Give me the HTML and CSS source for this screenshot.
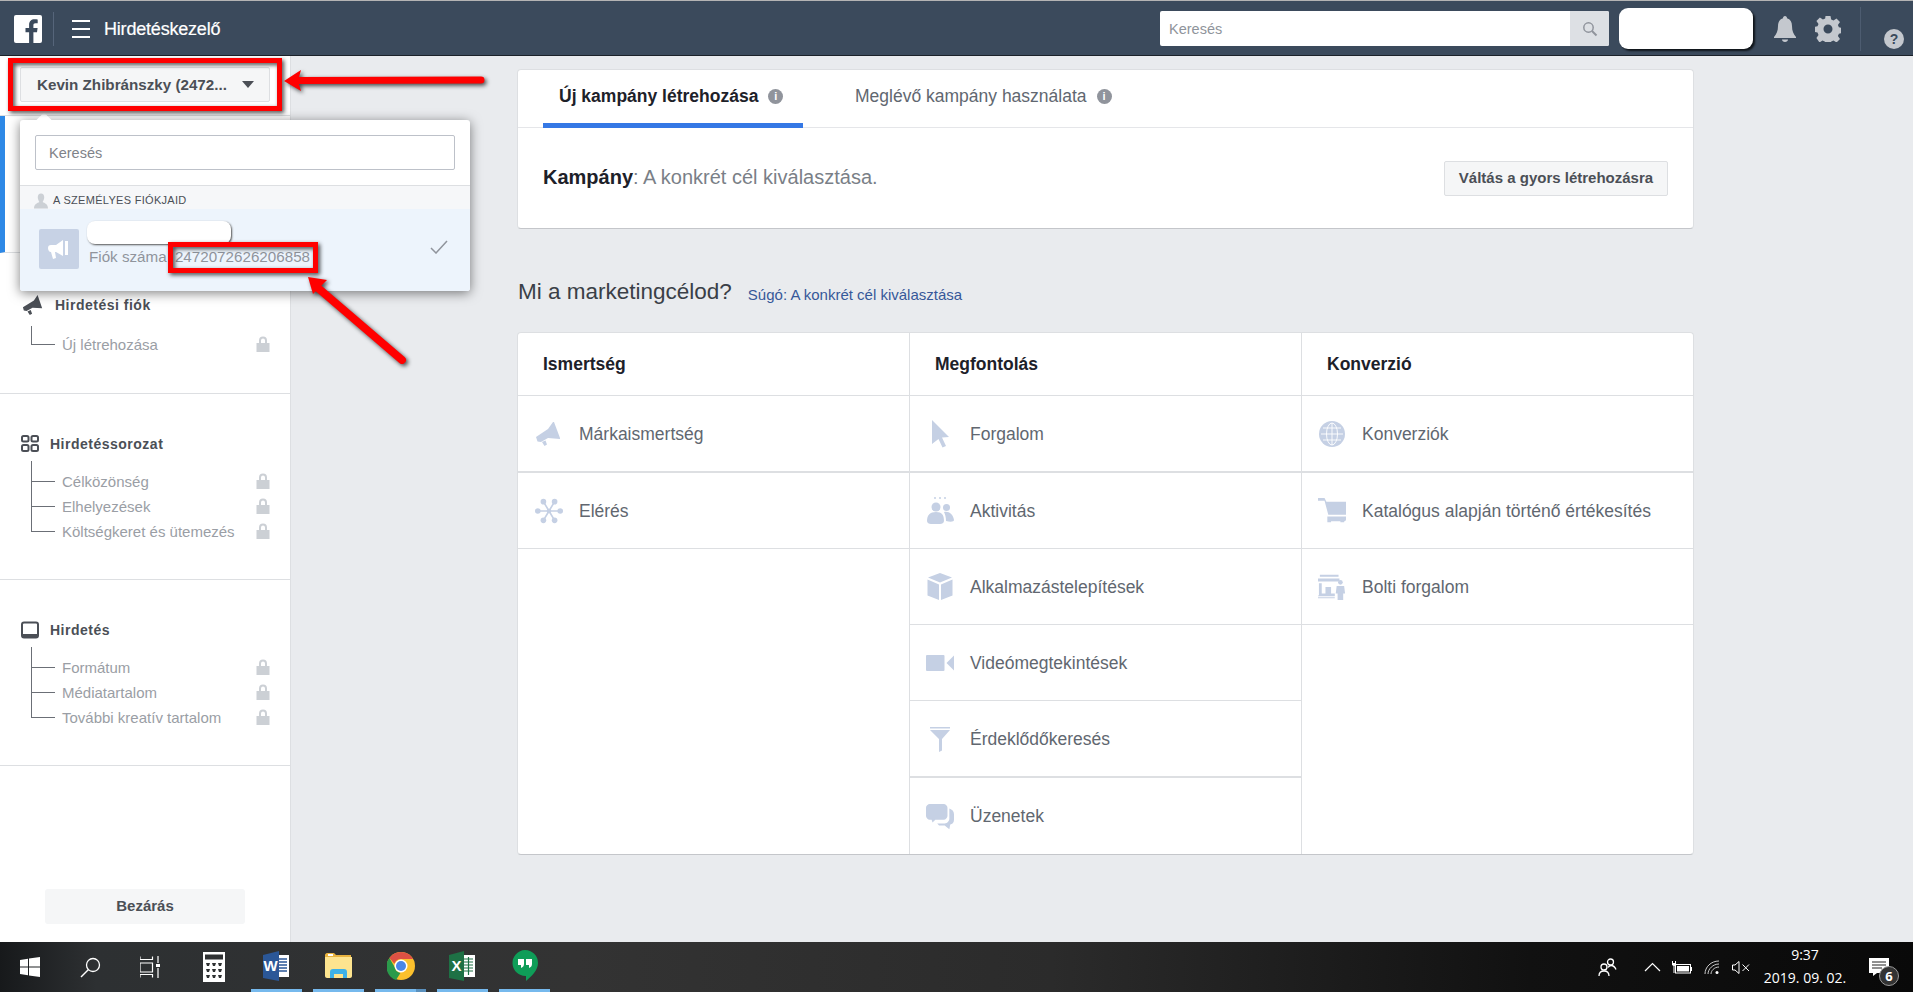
FILE: index.html
```html
<!DOCTYPE html>
<html lang="hu">
<head>
  <meta charset="UTF-8">
  <title>Hirdetéskezelő</title>
  <link rel="stylesheet" href="styles.css">
</head>
<body>
  <div class="page">
    <!-- felső sáv -->
    <header class="topbar">
      <div class="brand">
        <svg class="fb-logo" viewBox="0 0 28 28"><rect width="28" height="28" rx="2" fill="#fff"/><path fill="#3b4a5c" d="M19.4 28V17.2h3.6l.6-4.2h-4.2v-2.7c0-1.2.4-2.1 2.1-2.1h2.2V4.4c-.4-.1-1.700-.2-3.200-.2-3.200 0-5.400 2-5.400 5.500V13h-3.600v4.200h3.600V28z"/></svg>
      </div>
      <div class="burger"><span></span><span></span><span></span></div>
      <div class="app-title">Hirdetéskezelő</div>
      <div class="top-search">
        <span class="top-search-text">Keresés</span>
        <span class="top-search-btn"><svg width="16" height="16" viewBox="0 0 16 16"><circle cx="6.500" cy="6.500" r="4.700" fill="none" stroke="#90949c" stroke-width="1.500"/><path d="M10 10l4.500 4.500" stroke="#90949c" stroke-width="2"/></svg></span>
      </div>
      <div class="top-pill"></div>
      <svg class="top-bell" viewBox="0 0 22 26"><path fill="#c4c8ce" d="M11 0c1.300 0 2 1 2 2.200 3.400 1 5 4 5 7.800 0 5 1.500 8 4 11v1H0v-1c2.500-3 4-6 4-11 0-3.800 1.600-6.800 5-7.800C9 1 9.700 0 11 0zM8 23.500h6c0 1.500-1.300 2.500-3 2.500s-3-1-3-2.500z"/></svg>
      <svg class="top-gear" viewBox="0 0 26 26"><path fill="#c4c8ce" fill-rule="evenodd" d="M10.500 0h5l.7 3.600 2.300 1 3-2.100 3.500 3.500-2.100 3 1 2.300 3.100.7v5l-3.100.7-1 2.300 2.100 3-3.500 3.500-3-2.100-2.300 1-.7 3.100h-5l-.7-3.100-2.300-1-3 2.100L1.400 21.900l2.100-3-1-2.300-3-.7v-5l3-.7 1-2.300-2.100-3L4.900 1.400l3 2.100 2.300-1zM13 8.500a4.500 4.500 0 1 0 0 9 4.500 4.500 0 0 0 0-9z"/></svg>
      <span class="top-sep"></span>
      <span class="top-help">?</span>
    </header>

    <div class="main">
      <!-- bal oldali sáv -->
      <aside class="sidebar">
        <div class="acct">
          <div class="acct-btn"><span>Kevin Zhibránszky (2472...</span><i class="caret"></i></div>
        </div>
        <div class="sec-active"></div>

        <section class="sec sec-first">
          <div class="sec-head head-wide">
            <svg class="head-icon icon-horn" viewBox="0 0 24 24"><path fill="#4b4f56" d="M1 14.500L13 7l4-6 5 14.500-10.500-.5L5 18.500 2 18zM6 19l3.500-1.500 1.500 4-2.500 1.500z"/></svg>
            Hirdetési fiók
          </div>
          <ul class="tree tree-one">
            <li><i class="twig twig-only"></i><span>Új létrehozása</span><svg class="lock" viewBox="0 0 14 16"><path fill="#ccd0d5" d="M3 7V4.500a4 4 0 0 1 8 0V7h2.500v9H.5V7zm2 0h4V4.500a2 2 0 0 0-4 0z"/></svg></li>
          </ul>
        </section>

        <section class="sec">
          <div class="sec-head">
            <svg class="head-icon" viewBox="0 0 18 18"><g fill="none" stroke="#4b4f56" stroke-width="2"><rect x="1" y="1" width="6.500" height="5.500" rx="1.500"/><rect x="10.500" y="1" width="6.500" height="5.500" rx="1.500"/><rect x="1" y="10" width="6.500" height="6" rx="1.500"/><rect x="10.500" y="10" width="6.500" height="6" rx="1.500"/></g></svg>
            Hirdetéssorozat
          </div>
          <ul class="tree">
            <li><i class="twig twig-first"></i><span>Célközönség</span><svg class="lock" viewBox="0 0 14 16"><path fill="#ccd0d5" d="M3 7V4.500a4 4 0 0 1 8 0V7h2.500v9H.5V7zm2 0h4V4.500a2 2 0 0 0-4 0z"/></svg></li>
            <li><i class="twig"></i><span>Elhelyezések</span><svg class="lock" viewBox="0 0 14 16"><path fill="#ccd0d5" d="M3 7V4.500a4 4 0 0 1 8 0V7h2.500v9H.5V7zm2 0h4V4.500a2 2 0 0 0-4 0z"/></svg></li>
            <li><i class="twig twig-last"></i><span>Költségkeret és ütemezés</span><svg class="lock" viewBox="0 0 14 16"><path fill="#ccd0d5" d="M3 7V4.500a4 4 0 0 1 8 0V7h2.500v9H.5V7zm2 0h4V4.500a2 2 0 0 0-4 0z"/></svg></li>
          </ul>
        </section>

        <section class="sec">
          <div class="sec-head">
            <svg class="head-icon" viewBox="0 0 18 18"><rect x="1" y="1.500" width="16" height="15" rx="2" fill="none" stroke="#4b4f56" stroke-width="2"/><path d="M1 13h16v3.500H1z" fill="#4b4f56"/></svg>
            Hirdetés
          </div>
          <ul class="tree">
            <li><i class="twig twig-first"></i><span>Formátum</span><svg class="lock" viewBox="0 0 14 16"><path fill="#ccd0d5" d="M3 7V4.500a4 4 0 0 1 8 0V7h2.500v9H.5V7zm2 0h4V4.500a2 2 0 0 0-4 0z"/></svg></li>
            <li><i class="twig"></i><span>Médiatartalom</span><svg class="lock" viewBox="0 0 14 16"><path fill="#ccd0d5" d="M3 7V4.500a4 4 0 0 1 8 0V7h2.500v9H.5V7zm2 0h4V4.500a2 2 0 0 0-4 0z"/></svg></li>
            <li><i class="twig twig-last"></i><span>További kreatív tartalom</span><svg class="lock" viewBox="0 0 14 16"><path fill="#ccd0d5" d="M3 7V4.500a4 4 0 0 1 8 0V7h2.500v9H.5V7zm2 0h4V4.500a2 2 0 0 0-4 0z"/></svg></li>
          </ul>
        </section>

        <div class="close-btn">Bezárás</div>
      </aside>

      <!-- tartalom -->
      <main class="content">
        <div class="card card-top">
          <div class="tabs">
            <div class="tab tab-on">Új kampány létrehozása <i class="info">i</i></div>
            <div class="tab">Meglévő kampány használata <i class="info">i</i></div>
          </div>
          <div class="card-body">
            <div class="campaign"><b>Kampány</b>: A konkrét cél kiválasztása.</div>
            <div class="quick-btn">Váltás a gyors létrehozásra</div>
          </div>
        </div>

        <div class="goal-title">
          <h2>Mi a marketingcélod?</h2>
          <a href="#">Súgó: A konkrét cél kiválasztása</a>
        </div>

        <div class="card goals">
          <div class="goal-col">
            <div class="goal-head">Ismertség</div>
            <div class="goal-row thick">
              <svg class="goal-icon" viewBox="0 0 28 28"><path fill="#c5d0e4" d="M1 17l12-8 5-7h1l6 16v1l-12-1-7 4-3.500-.5zM7 22l3.500-1.500 1.500 4-2.500 1.500z"/></svg>
              Márkaismertség
            </div>
            <div class="goal-row">
              <svg class="goal-icon" viewBox="0 0 30 28"><g stroke="#c5d0e4" stroke-width="1.800" fill="#c5d0e4"><path d="M15 14L9 4M15 14l6-10M15 14l-11 0M15 14l11 0M15 14L9 24M15 14l6 10"/></g><g fill="#c5d0e4"><circle cx="9" cy="4" r="3"/><circle cx="21" cy="4" r="3"/><circle cx="3" cy="14" r="3"/><circle cx="27" cy="14" r="3"/><circle cx="9" cy="24" r="3"/><circle cx="21" cy="24" r="3"/><circle cx="15" cy="14" r="2.500"/></g></svg>
              Elérés
            </div>
          </div>
          <div class="goal-col">
            <div class="goal-head">Megfontolás</div>
            <div class="goal-row thick">
              <svg class="goal-icon" viewBox="0 0 28 28"><path fill="#c5d0e4" d="M6 0l17 17-7 .5 4 8.500-3.500 1.500-4-8.500L6 24z"/></svg>
              Forgalom
            </div>
            <div class="goal-row">
              <svg class="goal-icon" viewBox="0 0 28 28"><g fill="#c5d0e4"><circle cx="9" cy="1" r="1"/><circle cx="14" cy="1" r="1"/><circle cx="19" cy="1" r="1"/><circle cx="10" cy="10" r="4.500"/><circle cx="20.500" cy="10.500" r="3.500"/><path d="M1 24c0-6 3-9 9-9s8 3 8 9c0 2-2 3-4 3H5c-2 0-4-1-4-3zM18 15c5-1 9 2 10 8 0 2-4 2-8 1 0-4-1-7-2-9z"/></g></svg>
              Aktivitás
            </div>
            <div class="goal-row">
              <svg class="goal-icon" viewBox="0 0 28 28"><g fill="#c5d0e4"><path d="M14 0l12 4.500-12 5-12-5z"/><path d="M1.500 6.500l11.500 5V27L1.500 22.500zM26.500 6.500L15 11.500V27l11.500-4.500z"/></g></svg>
              Alkalmazástelepítések
            </div>
            <div class="goal-row">
              <svg class="goal-icon" viewBox="0 0 28 28"><g fill="#c5d0e4"><rect y="6" width="18.500" height="16" rx="1"/><path d="M28 6.500v15l-7.500-7.500z"/></g></svg>
              Videómegtekintések
            </div>
            <div class="goal-row thick">
              <svg class="goal-icon" viewBox="0 0 28 28"><g fill="#c5d0e4"><path d="M4 2h20v1.500H4z"/><path d="M4 5h20l-8 9v11.500l-3 1.500V14z"/></g></svg>
              Érdeklődőkeresés
            </div>
            <div class="goal-row last">
              <svg class="goal-icon" viewBox="0 0 30 28"><g fill="#c5d0e4"><path d="M4 0h15c2 0 4 2 4 4v9c0 2-2 4-4 4H10l-3 3-1-3H4c-2 0-4-2-4-4V4c0-2 2-4 4-4z"/><path d="M25 5c3 1 5 3 5 6v6c0 3-2 5-4 5l-1 5-5-4h-6l-2-2h8c3 0 5-3 5-5z"/></g></svg>
              Üzenetek
            </div>
          </div>
          <div class="goal-col goal-col-end">
            <div class="goal-head">Konverzió</div>
            <div class="goal-row thick">
              <svg class="goal-icon" viewBox="0 0 28 28"><circle cx="14" cy="14" r="13" fill="#c5d0e4"/><g fill="none" stroke="#fff" stroke-width=".9"><ellipse cx="14" cy="14" rx="5.500" ry="11"/><path d="M14 3v22M3 14h22M5 8h18M5 20h18"/></g></svg>
              Konverziók
            </div>
            <div class="goal-row">
              <svg class="goal-icon" viewBox="0 0 30 28"><g fill="#c5d0e4"><path d="M0 0h7l2 4h21v14H11L7 3H0z"/><path d="M10 20h20v3c0 1-1 2-2 2v1h-4v-1H14v1h-4z"/></g></svg>
              Katalógus alapján történő értékesítés
            </div>
            <div class="goal-row">
              <svg class="goal-icon" viewBox="0 0 30 28"><g fill="#c5d0e4"><path d="M2 1h20v2H2zM0 5h23v3H0zM1 10h3v11h4V14h6v7h4v2H0v2h18v-2H1zM0 24h18v2H0z"/><circle cx="24" cy="9" r="2.500"/><path d="M20 13h8l1 8h-2v7h-6v-7h-2z"/></g></svg>
              Bolti forgalom
            </div>
          </div>
        </div>
      </main>
    </div>

    <!-- tálca -->
    <footer class="taskbar">
      <div class="tb-slot">
        <svg width="20" height="20" viewBox="0 0 20 20"><path fill="#fff" d="M0 3l8-1.200v7.700H0zM9 1.600L20 0v9.500H9zM0 10.500h8v7.700L0 17zM9 10.500h11V20L9 18.400z"/></svg>
      </div>
      <div class="tb-slot">
        <svg width="21" height="21" viewBox="0 0 21 21"><circle cx="13" cy="8" r="6.500" fill="none" stroke="#fff" stroke-width="1.300"/><path d="M8.500 12.500L1 20" stroke="#fff" stroke-width="1.500"/></svg>
      </div>
      <div class="tb-slot">
        <svg width="20" height="22" viewBox="0 0 20 22"><g fill="none" stroke="#fff" stroke-width="1.200"><path d="M0 3.500h12.500V.5M0 .5v3M0 7h12.500v9H0zM0 21.500v-3h12.500v3M18 0v7M18 12v10"/></g><rect x="16" y="8" width="4" height="3" fill="#fff"/></svg>
      </div>
      <div class="tb-slot tb-calc">
        <svg width="22" height="30" viewBox="0 0 22 30"><path fill="#fff" fill-rule="evenodd" d="M0 0h22v30H0zM2 2.500v5h18v-5zM3 11l1 3h2l1-3zM9 11l1 3h2l1-3zM15 11l1 3h2l1-3zM3 17l1 3h2l1-3zM9 17l1 3h2l1-3zM15 17l1 3h2l1-3zM3 23l1 3h2l1-3zM9 23l1 3h2l1-3zM15 23l1 3h2l1-3z"/></svg>
      </div>
      <div class="tb-app">
        <svg width="27" height="30" viewBox="0 0 27 30"><path fill="#fff" d="M14 4h12v22H14z"/><path stroke="#2b5797" stroke-width="1.300" d="M16 8h8M16 11h8M16 14h8M16 17h8M16 20h8"/><path fill="#2b5797" d="M0 4l16-4v30L0 27z"/><text x="7.500" y="20" class="tb-letter">W</text></svg>
      </div>
      <div class="tb-app">
        <svg width="27" height="26" viewBox="0 0 27 26"><path fill="#e8b33f" d="M0 2c0-1 1-2 2-2h7l2 2h15v4H0z"/><path fill="#fde48f" d="M0 4h27v19c0 1-1 2-2 2H2c-1 0-2-1-2-2z"/><path fill="#fff" d="M3 1h5v2H3z"/><path fill="#3db1e8" d="M5 25v-6c0-2 1-3 3-3h11c2 0 3 1 3 3v6h-4v-4H9v4z"/></svg>
      </div>
      <div class="tb-app tb-app-multi">
        <svg width="28" height="30" viewBox="0 0 28 30"><circle cx="14" cy="15" r="14" fill="#fbc02d"/><path fill="#dd5144" d="M14 1a14 14 0 0 1 12.100 7H14a7 7 0 0 0-6.600 4.700L2.400 7A14 14 0 0 1 14 1z"/><path fill="#2a9a4b" d="M2.400 7l5.500 9.500a7 7 0 0 0 5.500 5.500L9 29A14 14 0 0 1 2.400 7z"/><circle cx="14" cy="15" r="6.500" fill="#fff"/><circle cx="14" cy="15" r="5" fill="#4a86e8"/></svg>
      </div>
      <div class="tb-app">
        <svg width="27" height="30" viewBox="0 0 27 30"><path fill="#fff" d="M13 4h13v22H13z"/><path stroke="#1e7145" stroke-width="1.200" d="M15 8h9M15 11h9M15 14h9M15 17h9M15 20h9M19.500 6v18"/><path fill="#1e7145" d="M0 4l15-4v30L0 27z"/><text x="7.500" y="20" class="tb-letter">X</text></svg>
      </div>
      <div class="tb-app">
        <svg width="26" height="31" viewBox="0 0 26 31"><path fill="#0f9d58" d="M13 0a13 13 0 0 1 13 13c0 7-6 13-12 18v-5A13 13 0 0 1 13 0z"/><path fill="#fff" d="M6 9h6v5c0 2-1 3-3 4v-3H6zM14 9h6v5c0 2-1 3-3 4v-3h-3z"/></svg>
      </div>

      <div class="tray">
        <div class="tray-item tray-people">
          <svg width="19" height="19" viewBox="0 0 19 19"><g fill="none" stroke="#fff" stroke-width="1.300"><circle cx="12.500" cy="4" r="3"/><circle cx="6" cy="9" r="3"/><path d="M1 18c0-3 2-5 5-5s5 2 5 5M10 9.500c1-1.500 2-2 3-2 2.500 0 4 1.500 5 4"/></g></svg>
        </div>
        <div class="tray-item tray-caret">
          <svg width="17" height="10" viewBox="0 0 17 10"><path d="M1 9l7.500-7.500L16 9" fill="none" stroke="#fff" stroke-width="1.200"/></svg>
        </div>
        <div class="tray-item tray-batt">
          <svg width="20" height="13" viewBox="0 0 20 13"><rect x="3.500" y="3.500" width="15" height="8.500" fill="none" stroke="#fff"/><path fill="#fff" d="M5 5h12v5.500H5zM19 6h1v4h-1zM0 0h1v2H0zM3 0h1v2H3zM0 2h4v2L2.500 5v7h-1V5L0 4z"/></svg>
        </div>
        <div class="tray-item tray-wifi">
          <svg width="16" height="15" viewBox="0 0 16 15"><g fill="none" stroke="#ccc" stroke-width="1"><path d="M1 14C1 7 7 1 15 1M4 14c0-5 5-10 11-10M7 14c0-3 3-7 8-7"/></g><circle cx="13" cy="12.500" r="1.500" fill="#fff"/></svg>
        </div>
        <div class="tray-item tray-vol">
          <svg width="19" height="13" viewBox="0 0 19 13"><g fill="none" stroke="#fff" stroke-width="1"><path d="M.5 4v5H3l4 3.500V.5L3 4zM10.500 3.500l6.500 6.500M17 3.500L10.500 10"/></g></svg>
        </div>
        <div class="clock"><span>9:37</span><span>2019. 09. 02.</span></div>
        <div class="notif">
          <svg width="20" height="18" viewBox="0 0 20 18"><path fill="#fff" d="M0 0h20v15H8l-4 3v-3H0z"/><path stroke="#222" d="M3 4h14M3 7h14M3 10h10"/></svg>
          <span class="notif-badge">6</span>
        </div>
      </div>
    </footer>

    <!-- fiókválasztó menü -->
    <div class="acct-menu">
      <div class="menu-search"><div class="menu-input">Keresés</div></div>
      <div class="menu-label">
        <svg width="14" height="16" viewBox="0 0 13 14"><path fill="#ccd0d5" d="M6.500 0C8.500 0 9.500 1.500 9.500 3.500S8.500 7 8 8c2 1 5 2 5 6H0c0-4 3-5 5-6-.5-1-1.500-2.500-1.500-4.500S4.500 0 6.500 0z"/></svg>
        A SZEMÉLYES FIÓKJAID
      </div>
      <div class="menu-row">
        <div class="menu-thumb"><svg width="22" height="20" viewBox="0 0 22 20"><path fill="#fff" d="M0 9c0-2 1-3 3-3h5l7-5v16l-7-4H7l1 6-3 1-2-7C1 13 0 11 0 9zM17 2h3v14h-3z"/></svg></div>
        <div class="menu-text">
          <div class="menu-pill"></div>
          <div class="menu-id">Fiók száma <span>2472072626206858</span></div>
        </div>
        <svg class="menu-check" width="18" height="14" viewBox="0 0 18 14"><path d="M1 8l5 5L17 1" fill="none" stroke="#90949c" stroke-width="1.500"/></svg>
      </div>
    </div>

    <!-- piros jelölések -->
    <svg class="marks" width="1913" height="992" viewBox="0 0 1913 992">
      <g fill="none" stroke="#f00" stroke-width="5">
        <rect x="10.500" y="60.500" width="269" height="48"/>
        <rect x="170.500" y="244.500" width="145" height="26"/>
      </g>
      <path d="M298 80.500L481 80" stroke="#f00" stroke-width="7" stroke-linecap="round"/>
      <path fill="#f00" d="M284 81l17-11-3 11 3 10z"/>
      <path d="M318 288l84 72" stroke="#f00" stroke-width="8" stroke-linecap="round"/>
      <path fill="#f00" d="M308 277l19 3-14 14z"/>
    </svg>
  </div>
</body>
</html>
```

FILE: styles.css
```css
* {
  margin: 0;
  padding: 0;
  box-sizing: border-box;
  list-style-type: none;
}

html, body {
  height: 100%;
  overflow: hidden;
}

body {
  font-family: "Liberation Sans", Arial, sans-serif;
  color: #1d2129;
  background: #e9ebee;
}

a {
  text-decoration: none;
}

.page {
  position: relative;
  height: 992px;
  display: flex;
  flex-direction: column;
  overflow: hidden;
}

/* felső sáv */
.topbar {
  height: 56px;
  flex: none;
  display: flex;
  align-items: center;
  padding: 1px 9px 0 0;
  background: #3b4a5c;
  border-top: 1px solid #b4b4b4;
  border-bottom: 1px solid #1b2129;
}

.brand {
  width: 54px;
  height: 34px;
  padding-left: 14px;
  display: flex;
  align-items: center;
  border-right: 1px solid #56657a;
}

.fb-logo {
  width: 28px;
  height: 28px;
}

.burger {
  width: 18px;
  margin-left: 18px;
  display: flex;
  flex-direction: column;
  gap: 6px;
}

.burger span {
  height: 2px;
  background: #fff;
}

.app-title {
  margin: 1px 0 0 14px;
  color: #fff;
  font-size: 18px;
  letter-spacing: -.2px;
  -webkit-text-stroke: .2px #fff;
}

.top-search {
  width: 449px;
  height: 35px;
  margin-left: auto;
  display: flex;
  align-items: center;
  justify-content: space-between;
  background: #fff;
  border-radius: 2px;
  overflow: hidden;
}

.top-search-text {
  padding: 1px 0 0 9px;
  font-size: 14.5px;
  color: #8f949b;
}

.top-search-btn {
  width: 39px;
  height: 100%;
  display: flex;
  align-items: center;
  justify-content: center;
  background: #dde0e4;
}

.top-pill {
  width: 134px;
  height: 41px;
  margin-left: 10px;
  background: #fff;
  border-radius: 9px;
  box-shadow: 2px 2px 2px #10151a;
}

.top-bell {
  width: 22px;
  height: 26px;
  margin-left: 21px;
}

.top-gear {
  width: 26px;
  height: 26px;
  margin-left: 19px;
}

.top-sep {
  width: 1px;
  height: 44px;
  margin: 0 23px 0 19px;
  background: #4d5c70;
}

.top-help {
  width: 20px;
  height: 20px;
  margin-top: 20px;
  border-radius: 50%;
  background: #c4c8ce;
  color: #3b4a5c;
  font-size: 14px;
  font-weight: bold;
  line-height: 20px;
  text-align: center;
}

/* bal oldali sáv */
.main {
  flex: 1;
  display: flex;
  min-height: 0;
}

.sidebar {
  width: 291px;
  flex: none;
  display: flex;
  flex-direction: column;
  background: #fff;
  border-right: 1px solid #dddfe2;
}

.acct {
  height: 60px;
  padding: 11px 20px 0;
  border-bottom: 1px solid #dddfe2;
}

.acct-btn {
  height: 35px;
  padding: 0 15px 0 16px;
  display: flex;
  align-items: center;
  justify-content: space-between;
  background: #f5f6f7;
  border: 1px solid #dddfe2;
  border-radius: 2px;
  font-size: 15.2px;
  font-weight: bold;
  color: #4b4f56;
}

.caret {
  width: 0;
  height: 0;
  border-style: solid;
  border-width: 7px 6px 0;
  border-color: #4b4f56 transparent transparent;
}

.sec-active {
  height: 137px;
  border-left: 5px solid #2d88e6;
  border-bottom: 1px solid #dddfe2;
}

.sec {
  height: 186px;
  padding-top: 40px;
  border-bottom: 1px solid #dddfe2;
}

.sec-first {
  height: 141px;
  padding-top: 42px;
}

.sec-head {
  height: 20px;
  padding-left: 21px;
  display: flex;
  align-items: center;
  gap: 11px;
  font-size: 14px;
  font-weight: bold;
  letter-spacing: .5px;
  color: #4b4f56;
}

.head-wide {
  padding-left: 22px;
}

.head-icon {
  width: 18px;
  height: 18px;
}

.icon-horn {
  width: 22px;
  height: 22px;
}

.tree {
  margin-top: 15px;
}

.tree-one {
  margin-top: 17px;
}

.tree li {
  height: 25px;
  padding: 0 20px 0 31px;
  display: flex;
  align-items: center;
  font-size: 15px;
  color: #9a9ea5;
}

.twig {
  width: 24px;
  height: 25px;
  margin-right: 7px;
  align-self: flex-start;
  border-left: 1px solid #6b6f76;
  background: linear-gradient(#6b6f76, #6b6f76) no-repeat 0 12px / 100% 1px;
}

.twig-first {
  height: 33px;
  margin-top: -8px;
  background-position: 0 20px;
}

.twig-last {
  height: 13px;
}

.twig-only {
  height: 19px;
  margin-top: -6px;
  background-position: 0 18px;
}

.lock {
  width: 14px;
  height: 16px;
  margin: -2px 0 0 auto;
}

.close-btn {
  width: 200px;
  height: 35px;
  margin: auto 0 18px 45px;
  background: #f5f6f7;
  border-radius: 3px;
  font-size: 15px;
  font-weight: bold;
  line-height: 34px;
  text-align: center;
  color: #4b4f56;
}

/* tartalom */
.content {
  flex: 1;
  padding: 13px 0 0 226px;
}

.card {
  width: 1177px;
  background: #fff;
  border: 1px solid #dddfe2;
  border-bottom-color: #c4c6ca;
  border-radius: 4px;
}

.card-top {
  height: 160px;
}

.tabs {
  height: 58px;
  padding-left: 25px;
  display: flex;
  border-bottom: 1px solid #e5e6e9;
}

.tab {
  height: 58px;
  padding: 0 16px 5px;
  margin-right: 35px;
  display: flex;
  align-items: center;
  gap: 10px;
  font-size: 17.5px;
  color: #616770;
  white-space: nowrap;
}

.tab-on {
  width: 260px;
  margin-right: 36px;
  padding-bottom: 0;
  font-weight: bold;
  color: #1d2129;
  border-bottom: 5px solid #3578e5;
}

.info {
  width: 15px;
  height: 15px;
  border-radius: 50%;
  background: #90949c;
  color: #fff;
  font-size: 11px;
  font-style: normal;
  font-weight: bold;
  line-height: 15px;
  text-align: center;
}

.card-body {
  height: 100px;
  padding: 0 25px;
  display: flex;
  align-items: center;
  justify-content: space-between;
}

.campaign {
  font-size: 20px;
  color: #7a7f87;
  margin-top: -2px;
}

.campaign b {
  color: #1d2129;
}

.quick-btn {
  width: 224px;
  height: 35px;
  margin-top: 1px;
  background: #f5f6f7;
  border: 1px solid #dddfe2;
  border-radius: 2px;
  font-size: 15px;
  font-weight: bold;
  line-height: 32px;
  text-align: center;
  color: #4b4f56;
}

.goal-title {
  height: 30px;
  margin: 48px 0 25px;
  padding-left: 1px;
  display: flex;
  align-items: center;
  gap: 16px;
}

.goal-title h2 {
  font-size: 22.5px;
  font-weight: normal;
  color: #3a3f47;
}

.goal-title a {
  font-size: 15px;
  color: #365899;
  margin-top: 5px;
}

.goals {
  height: 523px;
  display: grid;
  grid-template-columns: 392px 392px 1fr;
  overflow: hidden;
}

.goal-col {
  border-right: 1px solid #dddfe2;
}

.goal-col-end {
  border-right: 0;
}

.goal-col:first-child .goal-row {
  padding-left: 17px;
}

.goal-head {
  height: 63px;
  padding-left: 25px;
  display: flex;
  align-items: center;
  font-size: 17.5px;
  font-weight: bold;
  border-bottom: 1px solid #dddfe2;
}

.goal-row {
  height: 76px;
  padding: 1px 0 0 16px;
  display: flex;
  align-items: center;
  gap: 16px;
  font-size: 17.5px;
  color: #616770;
  border-bottom: 1px solid #dddfe2;
}

.goal-row.thick {
  height: 77px;
  border-bottom-width: 2px;
}

.goal-row.last {
  border-bottom: 0;
}

.goal-icon {
  width: 28px;
  height: 28px;
  flex: none;
}

/* tálca */
.taskbar {
  height: 50px;
  flex: none;
  display: flex;
  align-items: center;
  background: linear-gradient(90deg, #17191b 0, #2d3032 5%, #333 30%, #2b2b2b 55%, #111 80%, #090909 100%);
}

.tb-slot {
  width: 60px;
  height: 100%;
  display: flex;
  align-items: center;
  justify-content: center;
}

.tb-calc {
  width: 71px;
  padding-right: 4px;
}

.tb-app {
  width: 51px;
  height: 100%;
  margin-right: 11px;
  display: flex;
  align-items: center;
  justify-content: center;
  border-bottom: 3px solid #76b9ed;
}

.tb-app-multi {
  border-image: linear-gradient(90deg, #76b9ed 79%, #5a90bd 79%) 1;
}

.tb-letter {
  font: bold 15px "Liberation Sans", sans-serif;
  fill: #fff;
  text-anchor: middle;
}

.tray {
  margin-left: auto;
  height: 100%;
  display: flex;
  align-items: center;
  color: #fff;
}

.tray-item {
  display: flex;
  justify-content: center;
}

.tray-people {
  width: 36px;
}

.tray-caret {
  width: 24px;
  margin-left: 15px;
}

.tray-batt {
  width: 24px;
  margin-left: 6px;
}

.tray-wifi {
  width: 20px;
  margin-left: 8px;
}

.tray-vol {
  width: 20px;
  margin-left: 9px;
}

.clock {
  width: 108px;
  margin-top: -2px;
  display: flex;
  flex-direction: column;
  align-items: center;
  gap: 5px;
  font: 14px/18px "Open Sans", sans-serif;
}

.notif {
  position: relative;
  width: 54px;
  padding-left: 10px;
  display: flex;
}

.notif-badge {
  position: absolute;
  left: 20px;
  top: 8px;
  width: 20px;
  height: 20px;
  border: 1px solid #999;
  border-radius: 50%;
  background: #333;
  font: bold 13px/18px "Open Sans", sans-serif;
  text-align: center;
}

/* fiókválasztó menü */
.acct-menu {
  position: absolute;
  left: 20px;
  top: 120px;
  width: 450px;
  height: 171px;
  display: flex;
  flex-direction: column;
  background: #fff;
  border-radius: 3px;
  box-shadow: 0 2px 12px rgba(0, 0, 0, .5);
}

.acct-menu::before {
  content: "";
  position: absolute;
  left: 18px;
  top: -5px;
  width: 12px;
  height: 12px;
  background: #fff;
  transform: rotate(45deg);
}

.menu-search {
  height: 66px;
  padding: 15px 15px 0;
  border-bottom: 1px solid #dddfe2;
}

.menu-input {
  height: 35px;
  padding-left: 13px;
  border: 1px solid #bdc1c9;
  border-radius: 2px;
  font-size: 14.5px;
  line-height: 34px;
  color: #7f8389;
}

.menu-label {
  height: 23px;
  padding-left: 14px;
  display: flex;
  align-items: flex-end;
  gap: 5px;
  background: #f6f7f9;
  font-size: 11px;
  letter-spacing: .3px;
  color: #4b4f56;
  line-height: 17px;
}

.menu-row {
  flex: 1;
  padding: 0 22px 0 19px;
  display: flex;
  align-items: center;
  background: #edf4fc;
  border-radius: 0 0 3px 3px;
}

.menu-thumb {
  width: 40px;
  height: 40px;
  margin-top: -3px;
  display: flex;
  align-items: center;
  justify-content: center;
  background: #c7d2e5;
  border-radius: 2px;
}

.menu-text {
  margin-left: 8px;
  padding-top: 12px;
  align-self: flex-start;
}

.menu-pill {
  width: 144px;
  height: 23px;
  background: #fff;
  border-radius: 8px;
  box-shadow: 1px 1px 2px #555;
}

.menu-id {
  margin: 4px 0 0 2px;
  font-size: 15.2px;
  color: #90949c;
}

.menu-id span {
  margin-left: 4px;
}

.menu-check {
  margin-left: auto;
  margin-top: -6px;
}

/* piros jelölések */
.marks {
  position: absolute;
  left: 0;
  top: 0;
  pointer-events: none;
  filter: drop-shadow(2px 2px 2px rgba(0, 0, 0, .7));
}
```
